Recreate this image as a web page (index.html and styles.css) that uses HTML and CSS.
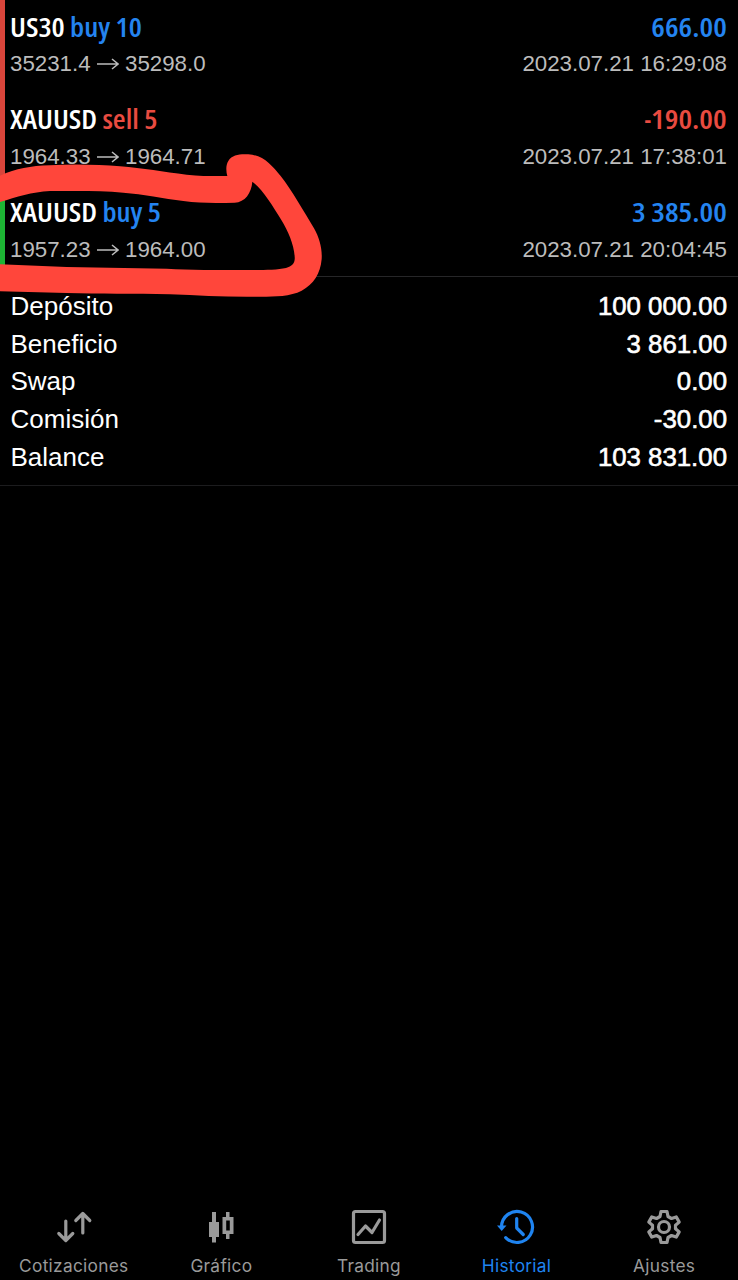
FILE: index.html
```html
<!DOCTYPE html>
<html lang="es">
<head>
  <meta charset="UTF-8" />
  <meta name="viewport" content="width=device-width, initial-scale=1.0" />
  <title>Historial</title>
  <link rel="stylesheet" href="styles.css">
</head>
<body>
  <main class="history">
    <section class="deals">
      <div class="deal loss">
        <div class="line title"><span class="symbol">US30 <span class="buy">buy 10</span></span><span class="profit buy">666.00</span></div>
        <div class="line detail"><span>35231.4 <svg class="arrow" viewBox="0 0 22 14"><path d="M0 7H21M15 2L21 7L15 12"/></svg> 35298.0</span><span>2023.07.21 16:29:08</span></div>
      </div>
      <div class="deal loss">
        <div class="line title"><span class="symbol">XAUUSD <span class="sell">sell 5</span></span><span class="profit sell"><span class="minus">-</span>190.00</span></div>
        <div class="line detail"><span>1964.33 <svg class="arrow" viewBox="0 0 22 14"><path d="M0 7H21M15 2L21 7L15 12"/></svg> 1964.71</span><span>2023.07.21 17:38:01</span></div>
      </div>
      <div class="deal win">
        <div class="line title"><span class="symbol">XAUUSD <span class="buy">buy 5</span></span><span class="profit buy">3 385.00</span></div>
        <div class="line detail"><span>1957.23 <svg class="arrow" viewBox="0 0 22 14"><path d="M0 7H21M15 2L21 7L15 12"/></svg> 1964.00</span><span>2023.07.21 20:04:45</span></div>
      </div>
      <svg class="marker" viewBox="0 0 1020 510">
        <path d="M0 107C50 85 90 78 150 76C220 71 300 74 360 79C430 84 490 96 560 104C610 109 650 108 682 108C678 94 677 75 685 63C697 43 720 42 745 43C790 45 815 76 842 108C875 150 912 215 942 265C958 293 967 325 965 357C961 402 941 432 905 452C868 471 815 470 770 470C680 471 600 467 510 463C400 461 300 462 200 459L0 454V373L200 381L500 386C570 390 650 390 730 390C780 390 828 391 858 384C877 379 886 368 884 350C882 314 865 275 844 240C817 197 790 151 757 125C754 160 735 186 704 188C650 189 600 190 550 183C490 176 430 162 370 158C300 151 220 153 150 153C95 156 50 171 0 186Z"/>
      </svg>
    </section>

    <section class="summary">
      <div class="line"><span>Depósito</span><span class="amount">100 000.00</span></div>
      <div class="line"><span>Beneficio</span><span class="amount">3 861.00</span></div>
      <div class="line"><span>Swap</span><span class="amount">0.00</span></div>
      <div class="line"><span>Comisión</span><span class="amount">-30.00</span></div>
      <div class="line"><span>Balance</span><span class="amount">103 831.00</span></div>
    </section>
  </main>

  <nav class="tabs">
    <div class="tab">
      <svg class="icon" viewBox="0 0 40 40"><path d="M11.8 14V33M4.8 26.5L11.8 33.5L18.8 26.5M28.8 26V7M21.8 13.5L28.8 6.5L35.8 13.5"/></svg>
      <span>Cotizaciones</span>
    </div>
    <div class="tab">
      <svg class="icon" viewBox="0 0 40 40"><path class="solid" d="M11 5H15V15H18V30H15V35.500H11V30H8V15H11Z"/><path class="solid" fill-rule="evenodd" d="M25 5H28.500V10H32.500V27H28.500V32H25V27H21.500V10H25ZM25.200 13.500V23.500H28.800V13.500Z"/></svg>
      <span>Gráfico</span>
    </div>
    <div class="tab">
      <svg class="icon" viewBox="0 0 40 40"><rect x="4.500" y="4.500" width="31" height="31" rx="2"/><path d="M9 27.500L16.500 19L23 25.500L30.500 13"/></svg>
      <span>Trading</span>
    </div>
    <div class="tab active">
      <svg class="icon" viewBox="0 0 40 40"><path d="M4.500 20A15.500 15.500 0 1 1 8.700 30.600M19.700 11.500V21L26.200 27.500"/><path class="solid" d="M0 18.500H9.500L4.700 24Z"/></svg>
      <span>Historial</span>
    </div>
    <div class="tab">
      <svg class="icon" viewBox="0 0 40 40"><path d="M17 4.500H23L24 9.500L27.500 11.500L32.200 9.900L35.200 15.100L31.500 18.300V21.700L35.200 24.900L32.200 30.100L27.500 28.500L24 30.500L23 35.500H17L16 30.500L12.500 28.500L7.800 30.100L4.800 24.900L8.500 21.700V18.300L4.800 15.100L7.800 9.900L12.500 11.500L16 9.500Z"/><circle cx="20" cy="20" r="5.500"/></svg>
      <span>Ajustes</span>
    </div>
  </nav>
</body>
</html>
```

FILE: styles.css
```css
* { box-sizing: border-box; }
body { margin: 0; height: 1280px; display: flex; flex-direction: column; overflow: hidden; background: #000; color: #fff; font-family: "Liberation Sans", Arial, sans-serif; }
.history { flex: 1; }
.line { display: flex; justify-content: space-between; align-items: center; white-space: nowrap; }

.deals { position: relative; padding-bottom: 4px; border-bottom: 1px solid #262628; }
.deal { height: 93px; padding: 8px 11px 0 5px; border-left: 5px solid; }
.deal:first-child { height: 91px; padding-top: 7px; }
.deal:nth-child(3) { height: 88px; }
.deal.loss { border-color: #d9453b; }
.deal.win { border-color: #1db534; }
.title { height: 38px; font-family: "Open Sans", sans-serif; font-size: 27px; font-weight: 600; font-stretch: 75%; }
.symbol { transform: scaleX(1.09); transform-origin: left center; }
.profit { transform: scaleX(1.13); transform-origin: right center; }
.minus { display: inline-block; transform: scaleX(.75); transform-origin: right; }
.detail { height: 37px; color: #bcbcbc; font-size: 22.3px; }
.deal + .deal .detail { height: 39px; }
.arrow { width: 22px; height: 14px; fill: none; stroke: #bcbcbc; stroke-width: 1.5; }
.buy { color: #2484f0; }
.sell { color: #e94b40; }

/* freehand circle over the last deal */
.marker { position: absolute; left: 0; top: 140px; width: 340px; height: 170px; fill: #ff463b; }

.summary { height: 209px; padding: 10.6px 11px 0 10.5px; border-bottom: 1px solid #1c1c1e; font-size: 26px; }
.summary .line { height: 37.75px; }
.amount { font-size: 25.8px; -webkit-text-stroke: .6px #fff; }

.tabs { display: flex; height: 76px; color: #9a9a9a; font-family: Inter, sans-serif; font-size: 17.3px; letter-spacing: .3px; }
.tab { flex: 1; display: flex; flex-direction: column; align-items: center; padding-top: 3px; }
.tab span { line-height: 22px; margin-top: 8px; }
.tab.active { color: #1f84f0; }
.icon { width: 40px; height: 40px; fill: none; stroke: currentColor; stroke-width: 3.2; stroke-linecap: round; stroke-linejoin: round; }
.icon .solid { fill: currentColor; stroke: none; }
```
